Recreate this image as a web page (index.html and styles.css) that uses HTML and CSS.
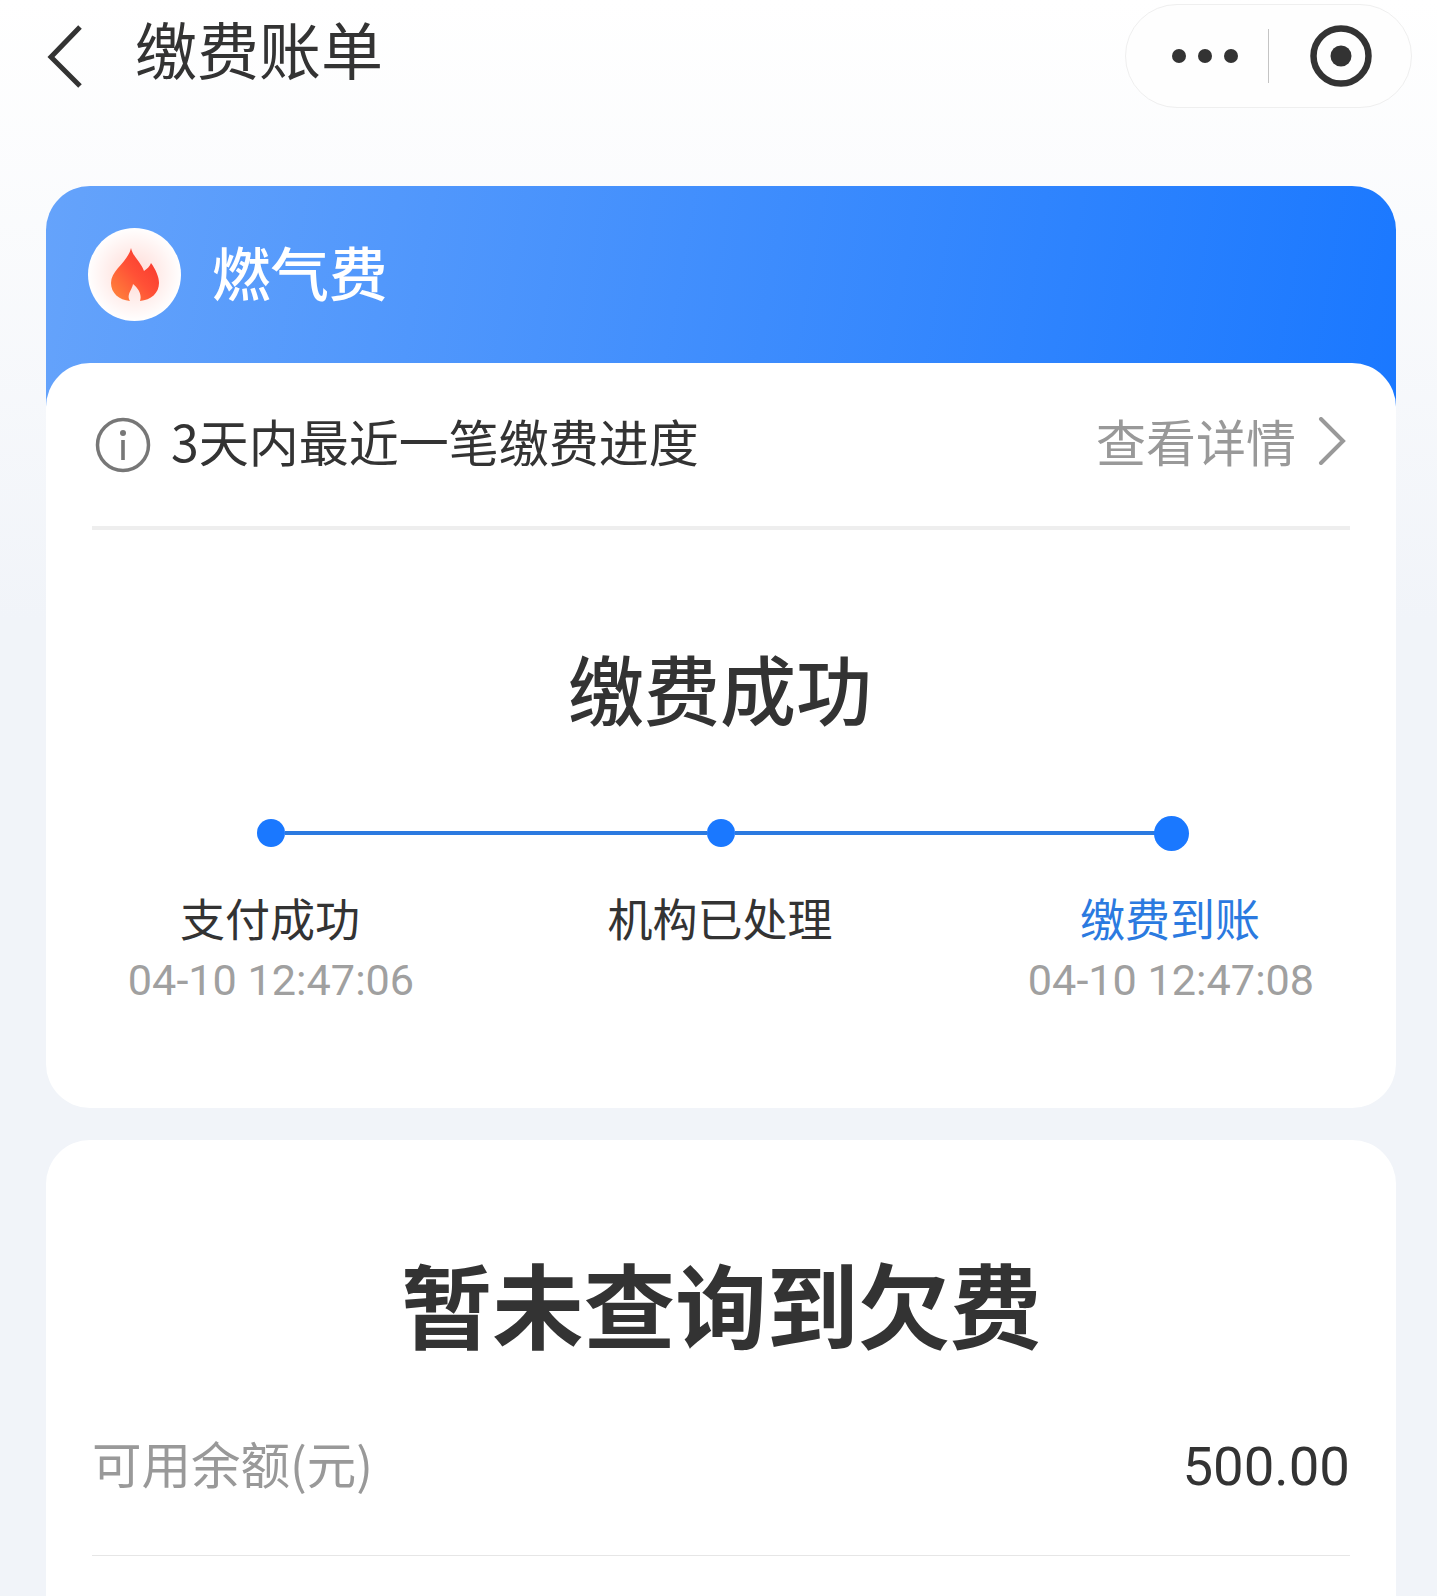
FILE: index.html
```html
<!DOCTYPE html>
<html lang="zh-CN">
<head>
<meta charset="utf-8">
<title>缴费账单</title>
<link rel="stylesheet" href="styles.css">
</head>
<body>
<div class="page">
  <header class="nav">
    <svg class="back" viewBox="0 0 40 64" width="40" height="64"><path d="M33 3 L4 33 L33 62" fill="none" stroke="#333" stroke-width="5"/></svg>
    <h1 class="nav-title">缴费账单</h1>
    <div class="capsule">
      <div class="dots"><i></i><i></i><i></i></div>
      <div class="cap-div"></div>
      <svg class="target" viewBox="0 0 62 62" width="62" height="62"><circle cx="31" cy="31" r="27.5" fill="none" stroke="#333" stroke-width="6.5"/><circle cx="31" cy="31" r="10.5" fill="#333"/></svg>
    </div>
  </header>

  <section class="card-wrap">
    <div class="card-head">
      <div class="logo">
        <svg viewBox="0 0 48 53" width="48" height="53">
          <defs><linearGradient id="fl" x1="0" y1="1" x2="1" y2="0"><stop offset="0" stop-color="#ff8a3c"/><stop offset=".5" stop-color="#ff5036"/><stop offset="1" stop-color="#f5302c"/></linearGradient></defs>
          <path d="M20 0 C22 9 30 14 33 23 C36 21 39 18 40 15 C45 22 48 29 48 35 C48 45 40 52 29 53 C31 47 28 41 22 36 C21 42 15 47 19 53 C8 52 0 45 0 35 C0 22 17 14 20 0 Z" fill="url(#fl)"/>
        </svg>
      </div>
      <span class="head-name">燃气费</span>
    </div>
    <div class="card main-card">
      <div class="progress-row">
        <svg class="info" viewBox="0 0 56 56" width="56" height="56"><circle cx="28" cy="28" r="25.500" fill="none" stroke="#777" stroke-width="3.500"/><circle cx="28" cy="16" r="3" fill="#777"/><rect x="26.200" y="23" width="3.600" height="20" fill="#777"/></svg>
        <span class="progress-text">3天内最近一笔缴费进度</span>
        <span class="link">查看详情</span>
        <svg class="chev" viewBox="0 0 28 48" width="28" height="48"><path d="M3 2 L25 24 L3 46" fill="none" stroke="#999" stroke-width="4" stroke-linecap="round"/></svg>
      </div>
      <h2 class="status">缴费成功</h2>
      <div class="track">
        <span class="dot"></span><span class="line"></span><span class="dot"></span><span class="line"></span><span class="dot big"></span>
      </div>
      <div class="steps">
        <div class="step"><div class="step-name">支付成功</div><div class="step-time">04-10 12:47:06</div></div>
        <div class="step"><div class="step-name">机构已处理</div></div>
        <div class="step"><div class="step-name active">缴费到账</div><div class="step-time">04-10 12:47:08</div></div>
      </div>
    </div>
  </section>

  <section class="card bill-card">
    <h2 class="bill-title">暂未查询到欠费</h2>
    <div class="bill-row"><span class="bill-label">可用余额(元)</span><span class="bill-value">500.00</span></div>
  </section>
</div>
</body>
</html>
```

FILE: styles.css
```css
* { box-sizing: border-box; }
html, body { margin: 0; padding: 0; }
body { width: 1437px; height: 1596px; overflow: hidden; background: #f1f4f9; font-family: "Noto Sans CJK SC", "Noto Sans", sans-serif; color: #333; }
.page { height: 1596px; padding: 0 41px 0 46px; background: linear-gradient(#fff 0, #f1f4f9 620px, #f1f4f9 100%); overflow: hidden; }

.nav { display: flex; align-items: flex-start; height: 186px; position: relative; }
.back { margin-top: 24px; flex: none; margin-left: 1px; }
.nav-title { margin: 6px 0 0 48px; font-size: 62px; line-height: 84px; font-weight: 400; }
.capsule { position: absolute; right: -16px; top: 4px; width: 287px; height: 104px; border: 1px solid #efefef; border-radius: 52px; background: #fefefe; display: flex; align-items: center; }
.dots { display: flex; gap: 12px; margin-left: 46px; }
.dots i { width: 14px; height: 14px; border-radius: 50%; background: #333; display: block; }
.cap-div { width: 1px; height: 54px; background: #c4c4c4; margin-left: 30px; }
.target { margin-left: 41px; }

.card-wrap { width: 1350px; }
.card-head { height: 221px; display: flex; align-items: center; padding: 0 0 44px 42px; border-radius: 44px 44px 0 0; background: linear-gradient(100deg, #65a3fb 0, #1a78ff 100%); }
.logo { width: 93px; height: 93px; border-radius: 50%; background: radial-gradient(circle, #ffd9d4 0, #fff 72%); display: flex; align-items: center; justify-content: center; }
.head-name { margin: 0 0 8px 31px; font-size: 58.5px; line-height: 80px; color: #fff; font-weight: 500; }
.card { background: #fff; border-radius: 44px; }
.main-card { position: relative; margin-top: -44px; height: 745px; padding: 0 46px; }

.progress-row { display: flex; align-items: center; height: 167px; border-bottom: 4px solid #eee; }
.info { flex: none; margin-left: 3px; }
.progress-text { margin: 0 0 10px 20px; font-size: 50px; line-height: 70px; flex: 1; }
.link { margin-bottom: 10px; font-size: 50px; line-height: 70px; color: #999; }
.chev { flex: none; margin: 0 4px 8px 22px; }

.status { margin: 107px 2px 0 0; text-align: center; font-size: 76px; line-height: 100px; font-weight: 500; }
.track { display: flex; align-items: center; margin: 78px 0 0 165px; width: 928px; height: 36px; }
.dot { width: 28px; height: 28px; border-radius: 50%; background: #1a78ff; flex: none; }
.dot.big { width: 35px; height: 35px; margin: 0 -3.5px; }
.line { flex: 1; height: 4px; background: #2b7ae0; }
.steps { display: grid; grid-template-columns: 450px 450px 450px; margin: 35px 0 0 -47px; width: 1350px; }
.step { text-align: center; }
.step-name { font-size: 45px; line-height: 64px; }
.step-name.active { color: #2b7ae0; }
.step-time { font-family: "Roboto", sans-serif; font-size: 43.2px; line-height: 56px; color: #a0a0a0; margin-top: 3px; padding-left: 2px; }

.bill-card { width: 1350px; margin-top: 32px; height: 600px; padding: 0 46px; }
.bill-title { margin: 0; padding-top: 97px; text-align: center; font-size: 91.5px; line-height: 130px; font-weight: 700; }
.bill-row { display: flex; justify-content: space-between; align-items: center; height: 189px; padding-top: 4px; border-bottom: 1px solid #e6e6e6; }
.bill-label { font-size: 49.5px; color: #999; line-height: 70px; }
.bill-value { margin-top: 6px; font-family: "Roboto", sans-serif; font-size: 54.5px; line-height: 70px; }
```
